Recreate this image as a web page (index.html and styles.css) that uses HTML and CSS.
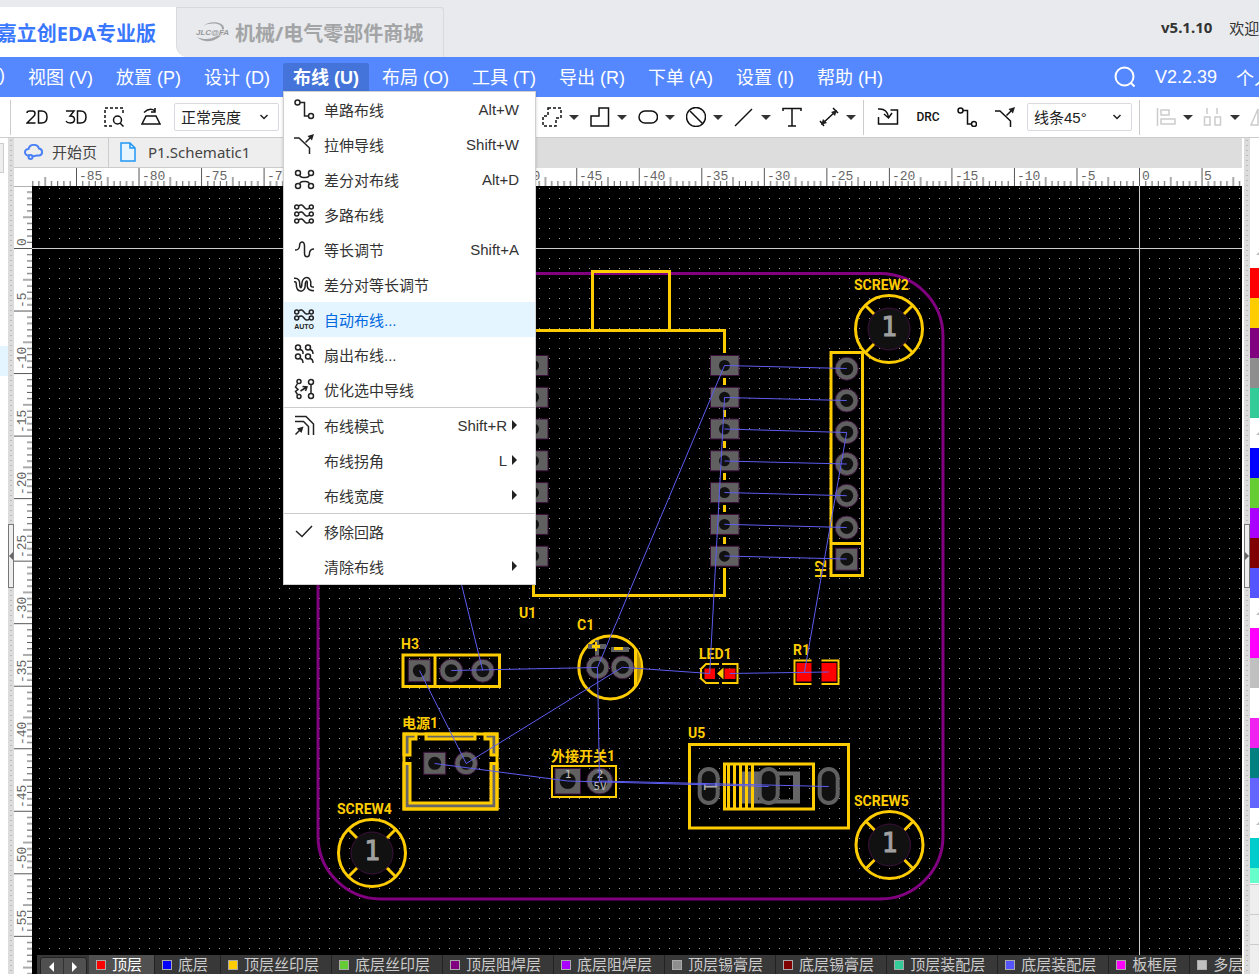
FILE: index.html
```html
<!DOCTYPE html>
<html lang="zh-CN">
<head>
<meta charset="utf-8">
<title>嘉立创EDA专业版</title>
<link rel="stylesheet" href="styles.css">
</head>
<body>
<svg class="defs" width="0" height="0" aria-hidden="true">
  <symbol id="i-route" viewBox="0 0 20 20"><circle cx="3.5" cy="3.5" r="2.5"/><path d="M6 3.5H10.5V17H14.500"/><circle cx="17" cy="17" r="2.500"/></symbol>
  <symbol id="i-stretch" viewBox="0 0 20 20"><path d="M0 4H5L15.500 14V20M11.500 8.500L18 2"/><path class="solid" d="M20 0L13.500 2L18 6.500Z"/></symbol>
  <symbol id="i-diff" viewBox="0 0 20 20"><circle cx="4" cy="4" r="2.500"/><circle cx="17" cy="4" r="2.500"/><circle cx="4" cy="17" r="2.500"/><circle cx="17" cy="17" r="2.500"/><path d="M5.500 6.500Q7 8.500 9 8.500H12Q14 8.500 15.500 6.500M5.500 14.500Q7 12.500 9 12.500H12Q14 12.500 15.500 14.500"/></symbol>
  <symbol id="i-row" viewBox="0 0 20 6"><circle cx="2.700" cy="3" r="2"/><circle cx="17.300" cy="3" r="2"/><path d="M4.500 2C7 0 8.500 1 10 3S13 6 15.500 4"/></symbol>
  <symbol id="i-multi" viewBox="0 0 20 20"><use href="#i-row" y="0" width="20" height="6"/><use href="#i-row" y="7" width="20" height="6"/><use href="#i-row" y="14" width="20" height="6"/></symbol>
  <symbol id="i-length" viewBox="0 0 20 20"><path d="M1 11Q5 11 5.500 7.500C5.500 1.500 10.500 1.500 10.500 7V14C10.500 19 15.500 19 15.500 14Q16 10 20 10"/></symbol>
  <symbol id="i-difflen" viewBox="0 0 20 20"><path class="fat" d="M0 6H1Q4 6 4 10C4 17 9.500 17 9.500 11S14 3 15 8V12Q15.500 15 20 15"/><path class="core" d="M-1 6H1Q4 6 4 10C4 17 9.500 17 9.500 11S14 3 15 8V12Q15.500 15 21 15"/></symbol>
  <symbol id="i-auto" viewBox="0 0 20 20"><use href="#i-row" y="0" width="20" height="6"/><use href="#i-row" y="6" width="20" height="6"/><text class="auto-text" x="10" y="20" text-anchor="middle">AUTO</text></symbol>
  <symbol id="i-fan" viewBox="0 0 20 20"><circle cx="4" cy="3.500" r="2.500"/><circle cx="14" cy="3.500" r="2.500"/><circle cx="4" cy="12.500" r="2.500"/><circle cx="14" cy="12.500" r="2.500"/><path d="M6 5.500Q9.500 6 9 10M16 5.500Q19 6 19 10M6 14.500Q9 15 9 19M16 14.500Q19 15 19 19"/></symbol>
  <symbol id="i-optimize" viewBox="0 0 20 20"><circle cx="5" cy="2.500" r="2"/><circle cx="5" cy="17.500" r="2"/><circle cx="17" cy="3" r="2.500"/><circle cx="17" cy="17" r="2.500"/><path d="M3.500 4.500L1.500 8L4 10.500L1.500 12.500L3.500 15.500M17 5.500V14.500M6.500 12L12 8.500M8.500 7.500L13 8L11.500 12"/></symbol>
  <symbol id="i-mode" viewBox="0 0 20 20"><path d="M1 1.500H12L19.500 9V20M1 6.500H9.500L14.500 11.500V20M1.500 19.500L7 14"/><path class="solid" d="M9.500 11.500L3 13.500L7.500 18Z"/></symbol>
  <symbol id="i-check" viewBox="0 0 20 20"><path d="M2 10L8 15.500L18 5"/></symbol>
  <symbol id="i-blank" viewBox="0 0 20 20"></symbol>
  <symbol id="i-2d" viewBox="0 0 22 20"><path d="M1 6Q1 4 3.500 4H6.500Q9 4 9 6.500Q9 8 8 9L1 16H9.500M12.500 4V16H15.500Q21 16 21 10T15.500 4Z"/></symbol>
  <symbol id="i-3d" viewBox="0 0 22 20"><path d="M1 4H9L5 9Q9.500 9 9.500 12.500T5 16Q2 16 1 14M12.500 4V16H15.500Q21 16 21 10T15.500 4Z"/></symbol>
  <symbol id="i-find" viewBox="0 0 20 20"><path stroke-dasharray="3 2" d="M8 19H1V1H19V8"/><circle cx="13.500" cy="13" r="4"/><path d="M16 16L19.500 19.500"/></symbol>
  <symbol id="i-plane" viewBox="0 0 20 20"><path d="M5 9H15L19 17H1ZM3 5.500Q9 0 14 4M14 1V5H10"/></symbol>
  <symbol id="i-dashpoly" viewBox="0 0 20 20"><path stroke-dasharray="3 2" d="M6 1H19V11H14V19H1V9H6Z"/></symbol>
  <symbol id="i-poly" viewBox="0 0 20 20"><path d="M9 1H18.500V19H1V9H9Z"/></symbol>
  <symbol id="i-oval" viewBox="0 0 20 20"><rect x="1" y="4" width="18.500" height="12" rx="6"/></symbol>
  <symbol id="i-ban" viewBox="0 0 20 20"><circle cx="10" cy="10" r="9.500"/><path d="M4 4L17 17"/></symbol>
  <symbol id="i-line" viewBox="0 0 20 20"><path d="M1 19L18 2"/></symbol>
  <symbol id="i-text" viewBox="0 0 20 20"><path d="M1 4V1.500H19V4M10 1.500V19M6 19H14"/></symbol>
  <symbol id="i-measure" viewBox="0 0 20 20"><path d="M3 17L17 4M1 14L5 19M14 1L19 6"/><path class="solid" d="M2 18L4 12L8 16ZM18 3L12 5L16 9Z"/></symbol>
  <symbol id="i-import" viewBox="0 0 22 20"><path d="M1 2Q10 1 11.500 10M7 7L11.500 11L15 6M13.500 3H20.500V17H1.500V10"/></symbol>
  <symbol id="i-align" viewBox="0 0 20 20"><path d="M1.500 1V19M5 3H13V8H5ZM5 12H19V17H5Z"/></symbol>
  <symbol id="i-spread" viewBox="0 0 20 20"><path d="M4 1V7M14 1V7M1.500 10H7V18H1.500ZM12 10H17.500V18H12Z"/></symbol>
  <symbol id="i-flip" viewBox="0 0 20 20"><path d="M1 18L8 2V18Z"/></symbol>
  <symbol id="i-search" viewBox="0 0 22 22"><circle cx="10.500" cy="10.500" r="9"/><path d="M17 17L20.500 20.500"/></symbol>
  <symbol id="i-chevron" viewBox="0 0 10 10"><path d="M1.500 3L5 6.500L8.500 3"/></symbol>
  <symbol id="g-screw" viewBox="-36 -36 72 72"><circle r="33.500" class="silk"/><path class="silk" d="M-23.500-23.500L-14-14M23.500-23.500L14-14M-23.500 23.500L-14 14M23.500 23.500L14 14"/><circle r="21" class="hole ring"/><text class="screw-num" x="0" y="7" text-anchor="middle">1</text></symbol>
  <symbol id="g-round" viewBox="-14 -14 28 28"><circle r="11.500" class="pad"/><circle r="6.500" class="hole"/></symbol>
  <symbol id="g-square" viewBox="-14 -14 28 28"><rect x="-11" y="-11" width="22" height="22" class="pad"/><circle r="6.500" class="hole"/></symbol>
  <symbol id="g-chip" viewBox="-16 -14 32 28"><rect x="-14" y="-10" width="28.500" height="20" class="pad"/><circle r="5.500" class="hole"/></symbol>
  <symbol id="g-slot" viewBox="-14 -20 28 40"><rect x="-9" y="-17" width="18" height="34" rx="9" class="slot"/></symbol>
</svg>

<header class="site">
  <a class="site-tab current" href="#">嘉立创EDA专业版</a>
  <a class="site-tab shop" href="#">
    <svg class="logo" viewBox="0 0 30 24" aria-hidden="true"><path class="swoosh" d="M7 5C13 -1 29 0 28 8C27 18 11 25 1 16C12 21 24 16 26 8C26 2 15 1 7 5Z"/><text x="0" y="14">JLC@FA</text></svg>
    机械/电气零部件商城</a>
  <div class="site-rest"></div>
  <div class="site-info"><strong>v5.1.10</strong><span>欢迎使用</span></div>
</header>

<nav class="menubar">
  <div class="menus">
    <button>)</button>
    <button>视图 (V)</button>
    <button>放置 (P)</button>
    <button>设计 (D)</button>
    <div class="menu-holder">
      <button class="open" aria-expanded="true">布线 (U)</button>
      <div class="dropdown" role="menu">
        <button role="menuitem"><svg><use href="#i-route"/></svg>单路布线<kbd>Alt+W</kbd></button>
        <button role="menuitem"><svg><use href="#i-stretch"/></svg>拉伸导线<kbd>Shift+W</kbd></button>
        <button role="menuitem"><svg><use href="#i-diff"/></svg>差分对布线<kbd>Alt+D</kbd></button>
        <button role="menuitem"><svg><use href="#i-multi"/></svg>多路布线</button>
        <button role="menuitem"><svg><use href="#i-length"/></svg>等长调节<kbd>Shift+A</kbd></button>
        <button role="menuitem"><svg><use href="#i-difflen"/></svg>差分对等长调节</button>
        <button role="menuitem" class="hover"><svg><use href="#i-auto"/></svg>自动布线...</button>
        <button role="menuitem"><svg><use href="#i-fan"/></svg>扇出布线...</button>
        <button role="menuitem"><svg><use href="#i-optimize"/></svg>优化选中导线</button>
        <hr>
        <button role="menuitem" class="sub"><svg><use href="#i-mode"/></svg>布线模式<kbd>Shift+R</kbd></button>
        <button role="menuitem" class="sub"><svg><use href="#i-blank"/></svg>布线拐角<kbd>L</kbd></button>
        <button role="menuitem" class="sub"><svg><use href="#i-blank"/></svg>布线宽度<kbd></kbd></button>
        <hr>
        <button role="menuitem"><svg><use href="#i-check"/></svg>移除回路</button>
        <button role="menuitem" class="sub"><svg><use href="#i-blank"/></svg>清除布线<kbd></kbd></button>
      </div>
    </div>
    <button>布局 (O)</button>
    <button>工具 (T)</button>
    <button>导出 (R)</button>
    <button>下单 (A)</button>
    <button>设置 (I)</button>
    <button>帮助 (H)</button>
  </div>
  <div class="account">
    <button class="search" aria-label="搜索"><svg><use href="#i-search"/></svg></button>
    <span class="version">V2.2.39</span><span>个人版</span>
  </div>
</nav>

<div class="toolbar">
  <div class="tools view-tools">
    <button class="wide" aria-label="2D"><svg><use href="#i-2d"/></svg></button>
    <button class="wide" aria-label="3D"><svg><use href="#i-3d"/></svg></button>
    <button aria-label="查找区域"><svg><use href="#i-find"/></svg></button>
    <button aria-label="翻转板子"><svg><use href="#i-plane"/></svg></button>
    <label class="picker"><select aria-label="亮度"><option>正常亮度</option></select><svg><use href="#i-chevron"/></svg></label>
  </div>
  <div class="tools draw-tools">
    <button class="drop" aria-label="区域"><svg><use href="#i-dashpoly"/></svg></button>
    <button class="drop" aria-label="填充"><svg><use href="#i-poly"/></svg></button>
    <button class="drop" aria-label="槽"><svg><use href="#i-oval"/></svg></button>
    <button class="drop" aria-label="禁止区域"><svg><use href="#i-ban"/></svg></button>
    <button class="drop" aria-label="线条"><svg><use href="#i-line"/></svg></button>
    <button aria-label="文本"><svg><use href="#i-text"/></svg></button>
    <button class="drop measure" aria-label="尺寸"><svg><use href="#i-measure"/></svg></button>
  </div>
  <div class="tools route-tools">
    <button class="wide" aria-label="导入"><svg><use href="#i-import"/></svg></button>
    <button class="drc">DRC</button>
    <button aria-label="单路布线"><svg><use href="#i-route"/></svg></button>
    <button aria-label="拉伸导线"><svg><use href="#i-stretch"/></svg></button>
    <label class="picker"><select aria-label="拐角"><option>线条45°</option></select><svg><use href="#i-chevron"/></svg></label>
  </div>
  <div class="tools align-tools">
    <button class="drop" aria-label="对齐"><svg><use href="#i-align"/></svg></button>
    <button class="drop" aria-label="分布"><svg><use href="#i-spread"/></svg></button>
    <button aria-label="镜像"><svg><use href="#i-flip"/></svg></button>
  </div>
</div>

<main class="workspace">
  <aside class="left-panel"><div class="panel-tab"></div><div class="panel-row"></div></aside>
  <div class="splitter"><button class="handle left" aria-label="收起左侧面板"></button></div>
  <section class="editor">
    <div class="doc-tabs">
      <a href="#" class="doc-tab"><svg class="cloud" viewBox="0 0 20 16"><path d="M6 11.500H4A3.200 3.200 0 0 1 4.500 5A5.500 5.500 0 0 1 15 4.500A3.600 3.600 0 0 1 15.500 11.500H13L8 12.500"/><circle cx="6.500" cy="13" r="2"/></svg>开始页</a>
      <a href="#" class="doc-tab sheet"><svg class="file" viewBox="0 0 16 20"><path d="M1 1H10L15 6V19H1ZM10 1V6H15"/></svg>P1.Schematic1</a>
    </div>
    <div class="ruler-top">
      <svg width="100%" height="18">
        <defs><pattern id="tx" patternUnits="userSpaceOnUse" x="62" y="0" width="62.530" height="18"><path class="tick" d="M.500 0V18M6.750 13V18M13 13V18M19.250 13V18M25.500 13V18M31.750 9V18M38 13V18M44.250 13V18M50.500 13V18M56.750 13V18"/></pattern></defs>
        <rect x="18" width="100%" height="18" fill="url(#tx)"/>
        <g class="ruler-text">
          <text x="65" y="12">-85</text><text x="128" y="12">-80</text><text x="190" y="12">-75</text><text x="253" y="12">-70</text><text x="503" y="12">-50</text><text x="565" y="12">-45</text><text x="628" y="12">-40</text><text x="691" y="12">-35</text><text x="753" y="12">-30</text><text x="816" y="12">-25</text><text x="878" y="12">-20</text><text x="941" y="12">-15</text><text x="1003" y="12">-10</text><text x="1066" y="12">-5</text><text x="1128" y="12">0</text><text x="1190" y="12">5</text>
        </g>
      </svg>
    </div>
    <div class="ruler-left">
      <svg width="18" height="100%">
        <defs><pattern id="ty" patternUnits="userSpaceOnUse" x="0" y="62" width="18" height="62.530"><path class="tick" d="M0 .500H18M13 6.750H18M13 13H18M13 19.250H18M13 25.500H18M9 31.750H18M13 38H18M13 44.250H18M13 50.500H18M13 56.750H18"/></pattern></defs>
        <rect width="18" height="100%" fill="url(#ty)"/>
        <g class="ruler-text">
          <text transform="translate(12 60) rotate(-90)">0</text><text transform="translate(12 122) rotate(-90)">-5</text><text transform="translate(12 184) rotate(-90)">-10</text><text transform="translate(12 247) rotate(-90)">-15</text><text transform="translate(12 309) rotate(-90)">-20</text><text transform="translate(12 372) rotate(-90)">-25</text><text transform="translate(12 434) rotate(-90)">-30</text><text transform="translate(12 497) rotate(-90)">-35</text><text transform="translate(12 559) rotate(-90)">-40</text><text transform="translate(12 622) rotate(-90)">-45</text><text transform="translate(12 684) rotate(-90)">-50</text><text transform="translate(12 747) rotate(-90)">-55</text>
        </g>
      </svg>
    </div>
    <div class="canvas">
      <svg class="board" width="100%" height="100%">
        <defs><pattern id="dots" patternUnits="userSpaceOnUse" x="7" y="2" width="10" height="10"><rect width="1" height="1" fill="#a0a0a0"/></pattern></defs>
        <rect width="100%" height="100%" fill="#000"/>
        <rect width="100%" height="100%" fill="url(#dots)"/>
        <path class="axis" d="M0 62.500H4000M1107.500 0V4000"/>
        <g transform="translate(-32 -186)">
          <rect class="outline" x="318" y="273.500" width="625" height="625.500" rx="63"/>
          <g class="silk">
            <path d="M592.500 330V271.500H669.500V330M533.500 595.500V330.500H724.500V595.500Z"/>
            <path d="M831 352.500H862.500V575.500H831ZM831 543.500H862.500"/>
            <path d="M403 655H499.500V686.500H403ZM435 655V686.500"/>
            <path d="M689.500 744.500H848.500V828H689.500Z"/>
          </g>
          <path class="gaps" d="M724.500 353V356M724.500 375V378M724.500 385V388M724.500 407V410M724.500 417V420M724.500 438V441M724.500 448V452M724.500 470V473M724.500 480V484M724.500 502V505M724.500 512V515M724.500 534V537M724.500 544V547M724.500 566V568"/>
          <g class="housing">
            <path d="M404 734H416V739H410V755H404ZM426 734H475V739H426ZM497 734H485V739H491V755H497ZM404 763.500H410V803H491V763.500H497V809H404Z"/>
            <path fill="none" d="M404 734H497V809H404Z"/>
          </g>
          <rect class="silk thin" x="552" y="766" width="64" height="31"/>
          <circle class="silk" cx="610.300" cy="667.500" r="31.500"/>
          <path fill="#b89200" d="M636 649Q646 667 636 686Z"/><path class="silk" d="M635.500 649V686"/>
          <path fill="#606060" d="M588 644H595V640H599V644H606V649H599V656H595V649H588ZM611 647H629V652H611Z"/>
          <path fill="#fc0" d="M592 645H595V642H597V645H600V648H597V651H595V648H592ZM614 647H623V650H614Z"/>
          <path class="assembly" d="M741 773.500H798V801.500H741ZM795 773V801"/><path fill="#666" d="M741 773H758V802H741Z"/>
          <path class="silk" d="M724.500 764H813.500V809H724.500ZM728.500 764V809M734.500 764V809M740.500 764V809M746.500 764V809M752.500 764V809"/>
          <g>
            <use href="#g-chip" x="517.500" y="351.500" width="32" height="28"/><use href="#g-chip" x="517.500" y="383.300" width="32" height="28"/><use href="#g-chip" x="517.500" y="415" width="32" height="28"/><use href="#g-chip" x="517.500" y="446.800" width="32" height="28"/><use href="#g-chip" x="517.500" y="478.600" width="32" height="28"/><use href="#g-chip" x="517.500" y="510.400" width="32" height="28"/><use href="#g-chip" x="517.500" y="542.200" width="32" height="28"/>
            <use href="#g-chip" x="708.500" y="351.500" width="32" height="28"/><use href="#g-chip" x="708.500" y="383.300" width="32" height="28"/><use href="#g-chip" x="708.500" y="415" width="32" height="28"/><use href="#g-chip" x="708.500" y="446.800" width="32" height="28"/><use href="#g-chip" x="708.500" y="478.600" width="32" height="28"/><use href="#g-chip" x="708.500" y="510.400" width="32" height="28"/><use href="#g-chip" x="708.500" y="542.200" width="32" height="28"/>
            <use href="#g-round" x="832.700" y="354.700" width="28" height="28"/><use href="#g-round" x="832.700" y="386.500" width="28" height="28"/><use href="#g-round" x="832.700" y="418.200" width="28" height="28"/><use href="#g-round" x="832.700" y="450" width="28" height="28"/><use href="#g-round" x="832.700" y="481.700" width="28" height="28"/><use href="#g-round" x="832.700" y="513.500" width="28" height="28"/><use href="#g-square" x="832.700" y="545.200" width="28" height="28"/>
            <use href="#g-square" x="405.300" y="656.700" width="28" height="28"/><use href="#g-round" x="437.200" y="656.700" width="28" height="28"/><use href="#g-round" x="468.700" y="656.700" width="28" height="28"/>
            <use href="#g-round" x="583.600" y="653.300" width="28" height="28"/><use href="#g-round" x="608.500" y="653.300" width="28" height="28"/>
            <use href="#g-square" x="420.700" y="749.300" width="28" height="28"/><use href="#g-round" x="452.200" y="749.300" width="28" height="28"/>
            <rect class="pad" x="555" y="768.500" width="25.500" height="25.500"/><circle class="hole" cx="567.700" cy="781" r="8"/>
            <circle class="pad" cx="599.700" cy="781" r="13"/><circle class="hole" cx="599.700" cy="781" r="8"/>
            <use href="#g-slot" x="694.700" y="766" width="28" height="40"/><use href="#g-slot" x="754.700" y="766" width="28" height="40"/><use href="#g-slot" x="814.700" y="766" width="28" height="40"/>
            <path fill="red" d="M704.500 668.500H715V679H704.500ZM724.500 668.500H735.500V679H724.500ZM796.500 663H811.500V681.500H796.500ZM821.500 663H836.500V681.500H821.500Z"/>
            <path fill="#fc0" d="M717 673.500L723.500 667.500V679.500Z"/>
            <path class="silk thin" d="M719 664H706L701 669V678.500L706 683H719M722 664H737.500V683H722M811.500 660.500H794.500V684H811.500M821.500 660.500H838.500V684H821.500"/>
          </g>
          <use href="#g-screw" x="853" y="293" width="72" height="72"/>
          <use href="#g-screw" x="336" y="817" width="72" height="72"/>
          <use href="#g-screw" x="853.500" y="809" width="72" height="72"/>
          <g class="pin-text"><text x="568" y="778">1</text><text x="600" y="778">2</text><text x="600" y="790">5V</text></g>
          <text class="slot-text" text-anchor="middle" transform="translate(704 786) rotate(90)">1</text>
          <g class="refs">
            <text x="854" y="290">SCREW2</text><text x="337" y="814">SCREW4</text><text x="854" y="806">SCREW5</text>
            <text x="519" y="618">U1</text><text x="577" y="630">C1</text><text x="401" y="649">H3</text><text x="699" y="659">LED1</text><text x="793" y="655">R1</text><text x="688" y="738">U5</text>
            <text x="402" y="728">电源1</text><text x="551" y="761">外接开关1</text>
            <text transform="translate(826 578) rotate(-90)">H2</text>
          </g>
          <path class="nets" d="M724.500 365.500L846.700 368.500M724.500 397.500L846.700 400.500M724.500 429L846.700 432.500M724.500 461L846.700 464M724.500 492.500L846.700 495.700M724.500 524.300L846.700 527.500M724.500 556L846.700 559M724.500 365.500L597.500 667.500L599.500 781M724.500 397.500L709.700 673.500M846.700 432.500L804.500 672M440 497L482.700 670.500M451.300 670.500L597.500 667.500M419.500 670.500L466.200 763.500L622.300 667.300L709.700 673.500M729.700 673.500L828.700 672M434.700 763.500L567.700 781L768.700 786.500M599.500 781L828.700 786.500"/>
        </g>
      </svg>
    </div>
    <div class="layers">
      <div class="pager"><button aria-label="向左"></button><button class="next" aria-label="向右"></button></div>
      <button class="layer active"><i class="c-red"></i>顶层</button>
      <button class="layer"><i class="c-blue"></i>底层</button>
      <button class="layer"><i class="c-yellow"></i>顶层丝印层</button>
      <button class="layer"><i class="c-green"></i>底层丝印层</button>
      <button class="layer"><i class="c-purple"></i>顶层阻焊层</button>
      <button class="layer"><i class="c-violet"></i>底层阻焊层</button>
      <button class="layer"><i class="c-gray"></i>顶层锡膏层</button>
      <button class="layer"><i class="c-maroon"></i>底层锡膏层</button>
      <button class="layer"><i class="c-mint"></i>顶层装配层</button>
      <button class="layer"><i class="c-indigo"></i>底层装配层</button>
      <button class="layer"><i class="c-magenta"></i>板框层</button>
      <button class="layer"><i class="c-silver"></i>多层</button>
    </div>
  </section>
  <div class="splitter"><button class="handle right" aria-label="收起右侧面板"></button></div>
  <aside class="swatches">
    <div class="group"></div>
    <div class="c-red"></div><div class="c-yellow"></div><div class="c-purple"></div><div class="c-gray"></div><div class="c-mint"></div>
    <div class="group"></div>
    <div class="c-blue"></div><div class="c-green"></div><div class="c-violet"></div><div class="c-maroon"></div><div class="c-indigo"></div>
    <div class="group"></div>
    <div class="c-magenta"></div><div class="c-silver"></div><div></div><div class="c-pink"></div><div class="c-teal"></div><div class="c-slate"></div>
    <div class="group"></div>
    <div class="c-cyan"></div><div class="c-aqua"></div>
    <div class="row"></div><div class="row"></div><div class="row"></div>
  </aside>
</main>
</body>
</html>
```
FILE: styles.css
```css
* { box-sizing: border-box; }

body {
  margin: 0;
  height: 100vh;
  display: flex;
  flex-direction: column;
  overflow: hidden;
  background: #fff;
  color: #333;
  font: 15px "Liberation Sans", "Noto Sans CJK SC", sans-serif;
}

button {
  margin: 0;
  padding: 0;
  border: 0;
  background: none;
  color: inherit;
  font: inherit;
  white-space: nowrap;
}

a { color: inherit; text-decoration: none; white-space: nowrap; }

.defs { position: absolute; }

symbol { overflow: visible; }

/* site header */
.site {
  flex: none;
  height: 57px;
  padding-top: 7px;
  display: flex;
  background: #e8eaed;
}
.site-tab {
  display: flex;
  align-items: center;
  font: bold 20px "Noto Sans", "Noto Sans CJK SC", sans-serif;
}
.site-tab.current {
  width: 176px;
  padding-right: 20px;
  justify-content: flex-end;
  background: #fff;
  color: #3a77ff;
}
.site-tab.shop {
  width: 268px;
  padding-left: 19px;
  gap: 9px;
  background: #e8eaed;
  border: 1px solid #d8dadd;
  border-bottom: 0;
  border-radius: 0 3px 0 12px;
  color: #a3a4a6;
  box-shadow: -12px 12px 0 #fff;
  clip-path: inset(0);
}
.logo { flex: none; width: 30px; height: 24px; overflow: visible; }
.logo .swoosh { fill: #a3a4a6; }
.logo text { font: italic bold 8px "Liberation Sans", sans-serif; fill: #97989a; stroke: #e8eaed; stroke-width: 1; paint-order: stroke; }
.site-rest { flex: 1; }
.site-info {
  flex: none;
  width: 98px;
  display: flex;
  gap: 17px;
  align-items: center;
  padding-bottom: 10px;
  white-space: nowrap;
  font: 15px "Noto Sans", "Noto Sans CJK SC", sans-serif;
}

/* menu bar */
.menubar {
  flex: none;
  height: 40px;
  display: flex;
  justify-content: space-between;
  background: #5588ff;
  color: #fff;
  font-size: 18px;
}
.menus { display: flex; gap: 3px; margin-left: -11px; align-items: center; }
.menus > button, .menu-holder > button { height: 28px; padding: 0 10px 4px; }
.menu-holder { position: relative; }
.menu-holder > .open { background: #4474d9; font-weight: bold; border-radius: 3px 3px 0 0; }
.account { flex: none; width: 145px; display: flex; gap: 19px; align-items: center; white-space: nowrap; }
.search { flex: none; width: 22px; height: 22px; }
.search svg { display: block; width: 22px; height: 22px; fill: none; stroke: #fff; stroke-width: 2; }

.dropdown {
  position: absolute;
  z-index: 5;
  left: 0;
  top: 100%;
  width: 253px;
  background: #fff;
  border: 1px solid #d0d0d0;
  color: #333;
  font-size: 15px;
  box-shadow: 0 1px 3px rgba(0, 0, 0, .2);
}
.dropdown button {
  width: 100%;
  height: 35px;
  padding: 0 16px 1px 10px;
  display: flex;
  align-items: center;
}
.dropdown svg {
  flex: none;
  width: 20px;
  height: 20px;
  margin-right: 10px;
  overflow: visible;
  fill: none;
  stroke: #222;
  stroke-width: 1.5;
}
.dropdown kbd { margin-left: auto; font: inherit; }
.dropdown .hover { background: #e5f5ff; color: #0068e0; }
.dropdown .sub { padding-right: 18px; }
.dropdown .sub::after {
  content: "";
  margin-left: 5px;
  border: 5px solid transparent;
  border-left-color: #222;
  border-right: 0;
}
.dropdown hr { margin: 0; border: 0; height: 1px; background: #ccc; }
.solid { fill: #222; stroke: none; }
.fat { stroke: #222; stroke-width: 5; }
.core { stroke: #fff; stroke-width: 2; }
.auto-text { font: bold 7px "Liberation Sans", sans-serif; fill: #222; stroke: none; }

/* toolbar */
.toolbar {
  flex: none;
  height: 41px;
  display: flex;
  align-items: center;
  background: #fff;
  border-bottom: 1px solid #ccc;
}
.tools { flex: none; display: flex; align-items: center; height: 35px; }
.tools button { flex: none; width: 20px; height: 20px; color: #111; }
.tools button.wide { width: 22px; }
.tools button svg {
  display: block;
  width: 100%;
  height: 20px;
  fill: none;
  stroke: currentColor;
  stroke-width: 1.5;
}
.tools button.drop { width: 37px; display: flex; align-items: center; gap: 7px; }
.tools button.drop svg { width: 20px; }
.drop::after {
  content: "";
  border: 5px solid transparent;
  border-top-color: #333;
  border-bottom: 0;
}
.view-tools { flex: 0 0 532px; margin-left: 10px; padding-left: 15px; gap: 17px; border-left: 1px solid #ccc; }
.view-tools .picker { margin-left: -4px; }
.draw-tools { gap: 11px; }
.draw-tools .measure { margin-left: 6px; }
.route-tools { margin-left: 7px; padding: 0 7px 0 13px; gap: 18px; border: 1px solid #ccc; border-width: 0 1px; }
.route-tools .picker { margin-left: -6px; }
.tools .drc { width: 22px; display: flex; justify-content: center; align-items: center; font: 500 12px Roboto, sans-serif; }
.align-tools { padding-left: 16px; gap: 10px; }
.align-tools button svg { color: #ccc; }
.picker { position: relative; width: 105px; }
.picker select {
  appearance: none;
  display: block;
  width: 100%;
  height: 28px;
  padding: 0 6px;
  border: 1px solid #d9d9e0;
  border-radius: 2px;
  background: #fff;
  color: #222;
  font: inherit;
}
.picker svg {
  position: absolute;
  right: 10px;
  top: 9px;
  width: 10px;
  height: 10px;
  fill: none;
  stroke: #222;
  stroke-width: 1.5;
  pointer-events: none;
}

/* workspace */
.workspace { flex: 1; min-height: 0; display: flex; }
.left-panel { width: 8px; padding-top: 5px; background: #fff; }
.panel-tab { height: 30px; width: 4px; background: #eee; border: 1px solid #ccc; border-left: 0; }
.panel-row { margin-top: 173px; height: 30px; background: #e5f5ff; }
.splitter {
  flex: none;
  width: 6px;
  display: flex;
  align-items: center;
  background: radial-gradient(circle, #bbb 1px, #dcdcdc 1px) 0 0 / 6px 5px;
}
.handle {
  width: 6px;
  height: 64px;
  border: 1px solid #777;
  background: #eee;
  display: flex;
  align-items: center;
}
.handle::after { content: ""; border: 4px solid transparent; border-left: 0; border-right-color: #666; }
.handle.right::after { border: 4px solid transparent; border-right: 0; border-left-color: #666; }

.editor {
  flex: 1;
  min-width: 0;
  display: grid;
  grid-template: 30px 18px minmax(0, 1fr) 19px / 18px minmax(0, 1fr);
  margin-right: 2px;
}
.doc-tabs { grid-column: 1 / 3; display: flex; background: #ddd; }
.doc-tab {
  display: flex;
  align-items: center;
  gap: 8px;
  padding: 0 11px 2px 10px;
  background: #eee;
  border-right: 1px solid #ccc;
  border-bottom: 1px solid #ccc;
  color: #444;
}
.doc-tab.sheet { width: 175px; padding-left: 11px; gap: 12px; font-family: "Noto Sans", sans-serif; }
.doc-tab svg { flex: none; fill: none; stroke: #4a80f5; stroke-width: 2; }
.doc-tab .cloud { width: 20px; height: 16px; }
.doc-tab .file { width: 16px; height: 20px; fill: #e8f5ff; stroke: #2196f3; stroke-width: 1.5; }

.ruler-top { grid-column: 1 / 3; background: #fff; overflow: hidden; }
.ruler-left { grid-row: 3 / 5; background: #fff; overflow: hidden; }
.ruler-top svg, .ruler-left svg { display: block; }
.tick { stroke: #555; }
.ruler-text { font: 13px "Liberation Mono", monospace; fill: #666; }

.canvas { overflow: hidden; background: #000; }
.board { display: block; }
.axis { stroke: #ccc; }
.outline { fill: none; stroke: #800080; stroke-width: 3; }
.silk { fill: none; stroke: #fc0; stroke-width: 3; }
.silk.thin { stroke-width: 2; }
.gaps { stroke: #000; stroke-width: 4; }
.housing { fill: #666; stroke: #fc0; stroke-width: 3; }
.assembly { fill: none; stroke: #666; stroke-width: 4; }
.pad { fill: #606060; stroke: #3c103c; }
.hole { fill: #111; }
.ring { stroke: #3c103c; }
.slot { fill: #111; stroke: #606060; stroke-width: 4; }
.nets { fill: none; stroke: #5c5cf0; }
.refs { font: bold 14px Roboto, "Noto Sans CJK SC", sans-serif; fill: #fc0; }
.screw-num { font: 26px "DejaVu Sans Mono", monospace; fill: #a0a0a0; stroke: #a0a0a0; stroke-width: 1; }
.pin-text { font: 11px "DejaVu Sans Mono", monospace; fill: #c0c0c0; text-anchor: middle; }
.slot-text { font: 18px "DejaVu Sans Mono", monospace; fill: #aaa; }

.layers {
  grid-column: 2;
  display: flex;
  overflow: hidden;
  padding-left: 5px;
  background: linear-gradient(to right, #000 5px, #383838 5px);
  color: #ccc;
}
.pager { flex: none; width: 47px; margin: 2px 2px 0 3px; height: 20px; display: flex; background: #505050; border: 1px solid #222; border-radius: 3px; }
.pager button { width: 50%; display: flex; align-items: center; justify-content: center; border-right: 1px solid #333; }
.pager button::after { content: ""; border: 5px solid transparent; border-left: 0; border-right-color: #fff; }
.pager .next { border: 0; }
.pager .next::after { border: 5px solid transparent; border-right: 0; border-left-color: #fff; }
.layer {
  flex: none;
  height: 19px;
  line-height: 19px;
  display: flex;
  align-items: center;
  gap: 6px;
  padding: 0 12px 0 7px;
  border-right: 1px solid #222;
}
.layer.active { background: #505050; color: #fff; }
.layer i { width: 10px; height: 10px; border: 1px solid #aaa; }

.swatches { flex: 0 0 9px; overflow: hidden; background: #fff; padding-top: 100px; }
.swatches div { height: 30px; }
.swatches .group { display: flex; align-items: center; justify-content: flex-end; }
.swatches .group::after { content: ""; border: 3px solid transparent; border-width: 0 0 3px 3px; border-bottom-color: #bbb; }
.swatches .c-aqua { height: 15px; margin-bottom: 1px; }
.swatches .row { background: #eee; border-top: 1px solid #ccc; }

.c-red { background: #f00; }
.c-blue { background: #00f; }
.c-yellow { background: #fc0; }
.c-green { background: #6c3; }
.c-purple { background: #800080; }
.c-violet { background: #a0f; }
.c-gray { background: #8e8e8e; }
.c-maroon { background: #800000; }
.c-mint { background: #3c9; }
.c-indigo { background: #55f; }
.c-magenta { background: #f0f; }
.c-silver { background: #c0c0c0; }
.c-pink { background: #f022f0; }
.c-teal { background: #008080; }
.c-slate { background: #6464ff; }
.c-cyan { background: #0cc; }
.c-aqua { background: #6fc; }
```
